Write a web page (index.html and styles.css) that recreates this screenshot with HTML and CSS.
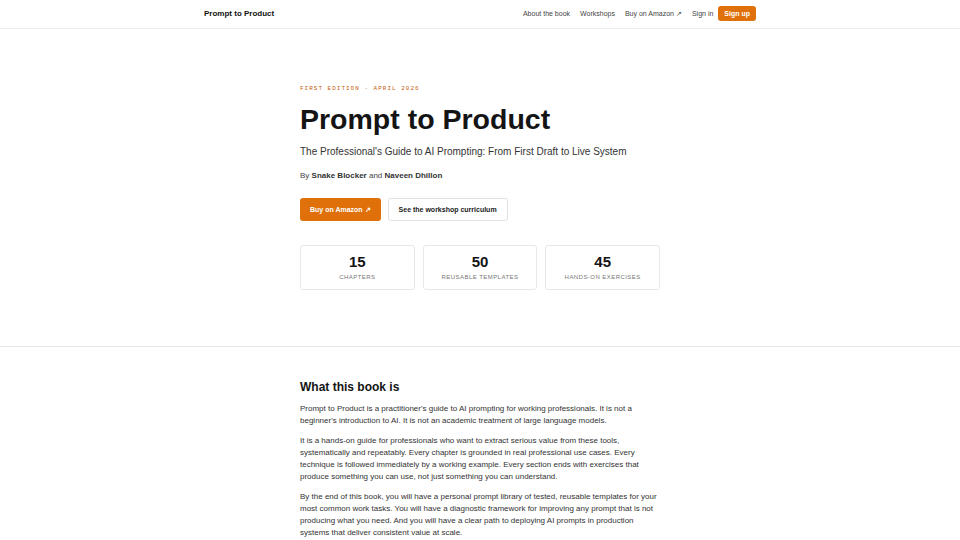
FILE: index.html
```html
<!DOCTYPE html>
<html lang="en">
<head>
<meta charset="utf-8">
<title>Prompt to Product</title>
<link rel="stylesheet" href="styles.css">
</head>
<body>
<header class="site-header">
  <div class="header-inner">
    <a class="brand" href="#">Prompt to Product</a>
    <nav class="nav">
      <a href="#">About the book</a>
      <a href="#">Workshops</a>
      <a href="#">Buy on Amazon ↗</a>
      <a href="#">Sign in</a>
      <a class="btn-signup" href="#">Sign up</a>
    </nav>
  </div>
</header>
<main>
  <section class="hero">
    <div class="container">
      <p class="eyebrow">First edition · April 2026</p>
      <h1 class="title">Prompt to Product</h1>
      <p class="subtitle">The Professional's Guide to AI Prompting: From First Draft to Live System</p>
      <p class="authors">By <strong>Snake Blocker</strong> and <strong>Naveen Dhillon</strong></p>
      <div class="actions">
        <a class="btn btn-primary" href="#">Buy on Amazon ↗</a>
        <a class="btn btn-secondary" href="#">See the workshop curriculum</a>
      </div>
      <div class="stats">
        <div class="stat"><div class="stat-num">15</div><div class="stat-label">Chapters</div></div>
        <div class="stat"><div class="stat-num">50</div><div class="stat-label">Reusable templates</div></div>
        <div class="stat"><div class="stat-num">45</div><div class="stat-label">Hands-on exercises</div></div>
      </div>
    </div>
  </section>
  <section class="about">
    <div class="container">
      <h2 class="section-title">What this book is</h2>
      <p>Prompt to Product is a practitioner's guide to AI prompting for working professionals. It is not a beginner's introduction to AI. It is not an academic treatment of large language models.</p>
      <p>It is a hands-on guide for professionals who want to extract serious value from these tools, systematically and repeatably. Every chapter is grounded in real professional use cases. Every technique is followed immediately by a working example. Every section ends with exercises that produce something you can use, not just something you can understand.</p>
      <p>By the end of this book, you will have a personal prompt library of tested, reusable templates for your most common work tasks. You will have a diagnostic framework for improving any prompt that is not producing what you need. And you will have a clear path to deploying AI prompts in production systems that deliver consistent value at scale.</p>
    </div>
  </section>
</main>
</body>
</html>
```
FILE: styles.css
```css
* { box-sizing: border-box; }
html, body { margin: 0; padding: 0; }
body {
  font-family: "Liberation Sans", Arial, sans-serif;
  color: #1a1a1a;
  background: #fff;
  font-size: 8px;
  line-height: 12px;
}
a { color: inherit; text-decoration: none; }
p { margin: 0; }

.site-header {
  border-bottom: 1px solid #ececec;
}
.header-inner {
  width: 552px;
  margin: 0 auto;
  height: 28px;
  display: flex;
  align-items: center;
  justify-content: space-between;
}
.brand {
  font-weight: 700;
  font-size: 8px;
  color: #111;
}
.nav {
  display: flex;
  align-items: center;
  gap: 10px;
  font-size: 7px;
  color: #444;
}
.btn-signup {
  background: #e0700a;
  color: #fff;
  font-weight: 700;
  border-radius: 3px;
  padding: 0 6px;
  height: 15px;
  display: inline-flex;
  align-items: center;
  margin-left: -5px;
  margin-top: -1px;
}

.container {
  width: 360px;
  margin: 0 auto;
}
.hero {
  padding: 55px 0 56px;
  border-bottom: 1px solid #e6e6e6;
}
.eyebrow {
  font-family: "Liberation Mono", "DejaVu Sans Mono", monospace;
  text-transform: uppercase;
  font-size: 6px;
  letter-spacing: 1px;
  color: #c5600f;
  line-height: 10px;
}
.title {
  margin: 8px 0 0;
  font-size: 28.5px;
  line-height: 34px;
  font-weight: 700;
  color: #141414;
}
.subtitle {
  margin-top: 9px;
  font-size: 10px;
  line-height: 14px;
  color: #333;
}
.authors {
  margin-top: 11px;
  font-size: 8px;
  line-height: 12px;
  color: #444;
}
.authors strong { color: #333; }
.actions {
  margin-top: 16px;
  display: flex;
  gap: 7px;
}
.btn {
  display: inline-flex;
  align-items: center;
  height: 23px;
  padding: 0 10px;
  border-radius: 3px;
  font-weight: 700;
  font-size: 7px;
}
.btn-primary {
  background: #e0700a;
  color: #fff;
}
.btn-secondary {
  background: #fff;
  border: 1px solid #e2e2e2;
  color: #1a1a1a;
}
.stats {
  margin-top: 24px;
  display: grid;
  grid-template-columns: repeat(3, 1fr);
  gap: 8px;
}
.stat {
  border: 1px solid #e8e8e8;
  border-radius: 3px;
  height: 45px;
  display: flex;
  flex-direction: column;
  align-items: center;
  justify-content: center;
}
.stat-num {
  font-size: 15px;
  font-weight: 700;
  line-height: 16px;
  color: #141414;
}
.stat-label {
  margin-top: 3px;
  font-size: 6px;
  letter-spacing: 0.45px;
  text-transform: uppercase;
  color: #777;
  line-height: 8px;
}

.about {
  padding-top: 32px;
}
.section-title {
  margin: 0 0 8px;
  font-size: 12px;
  line-height: 16px;
  font-weight: 700;
  color: #141414;
}
.about p {
  color: #333;
  margin-bottom: 8px;
}
```
